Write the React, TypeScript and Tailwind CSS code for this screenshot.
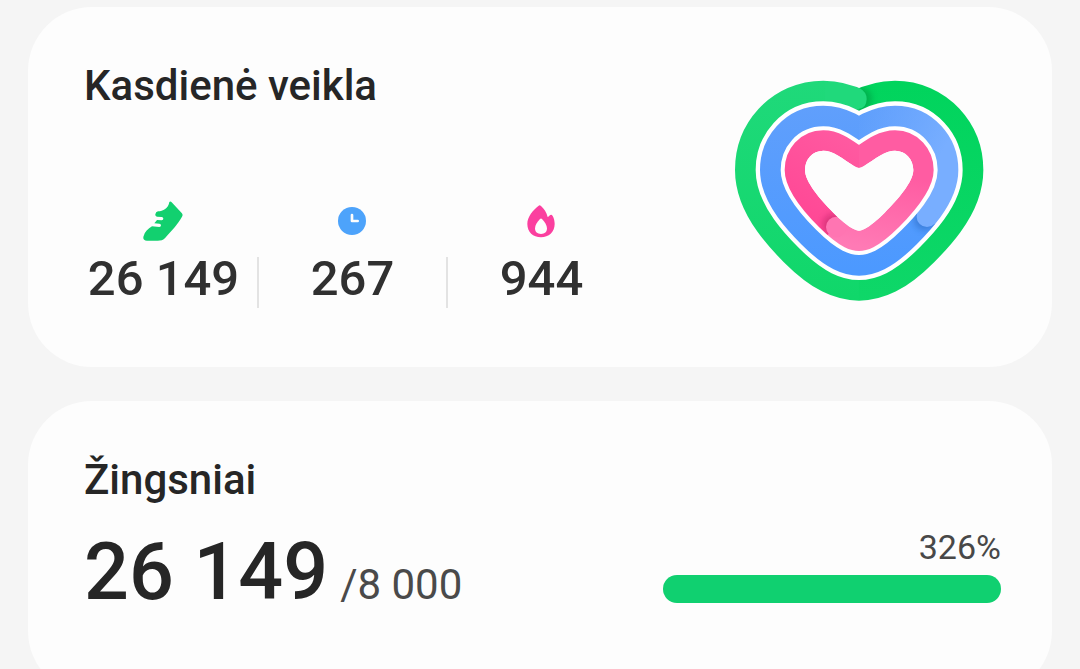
import type React from "react"

const HEART =
  "M402 294 Q396 294 388 289 C350 264 325 242 295 242 C262 242 240 268 240 300 C240 335 285 388 325 428 C345 448 368 468 386 477 Q396 482 402 482 Q408 482 418 477 C436 468 459 448 479 428 C519 388 565 335 565 300 C565 268 542 242 510 242 C480 242 454 264 416 289 Q408 294 402 294 Z"

interface Stat {
  label: string
  value: string
  icon: React.ReactNode
}

const ShoeIcon = () => (
  <svg viewBox="0 0 120 120" className="mr-1 h-10 w-10" aria-hidden="true">
    <path
      fill="#12d06f"
      d="M79 3 C81 0 84 1 86 4 L116 36 Q121 41 117 47 C105 70 84 90 67 110 C61 117 53 119 44 119 L12 119 C2 119 -1 112 2 105 C5 93 15 83 27 76 L49 78 Q54 78 54 73 Q54 69 49 68 L34 67 L42 57 L56 58 Q61 57 61 53 Q61 48 56 48 L42 47 Q36 46 37 40 Q38 32 45 31 C60 31 76 22 79 3 Z"
    />
  </svg>
)

const ClockIcon = () => (
  <svg viewBox="0 0 120 120" className="mr-1 h-10 w-10" aria-hidden="true">
    <circle cx="60" cy="60" r="42" fill="#4da3fb" />
    <path d="M60 42 V60 H77" fill="none" stroke="#fdfdfd" strokeWidth="8" strokeLinecap="round" strokeLinejoin="round" />
  </svg>
)

const FlameIcon = () => (
  <svg viewBox="0 0 120 120" className="mr-1 h-10 w-10" aria-hidden="true">
    <path
      fill="#fb3f9f"
      d="M53 14 Q56 11 60 15 C69 23 77 35 80 48 C83 47 85 44 88 42 Q92 40 95 45 C99 52 101 61 101 69 C101 93 83 109 60 109 C36 109 19 93 19 69 C19 46 36 28 53 14 Z"
    />
    <path fill="#fdfdfd" d="M57 54 Q60 51 63 54 C71 63 78 72 78 82 C78 93 71 99 60 99 C49 99 42 93 42 82 C42 72 49 63 57 54 Z" />
  </svg>
)

const stats: Stat[] = [
  { label: "Žingsniai", value: "26 149", icon: <ShoeIcon /> },
  { label: "Aktyvus laikas", value: "267", icon: <ClockIcon /> },
  { label: "Kalorijos", value: "944", icon: <FlameIcon /> },
]

// Every ring is an outward offset of the same inner heart
const RingMask = ({ id, outer, inner }: { id: string; outer: number; inner: number }) => (
  <mask id={id} maskUnits="userSpaceOnUse" x="0" y="0" width="810" height="720">
    <path d={HEART} fill="none" stroke="#fff" strokeWidth={outer} strokeLinejoin="round" />
    <path d={HEART} fill="#000" stroke="#000" strokeWidth={inner} strokeLinejoin="round" />
  </mask>
)

const HeartRings = () => (
  <svg viewBox="3 -3 810 720" className="mt-2 h-[240px] w-[270px] shrink-0" role="img" aria-label="Kasdienė veikla">
    <defs>
      <RingMask id="steps" outer={420} inner={296} />
      <RingMask id="time" outer={270} inner={146} />
      <RingMask id="calories" outer={122} inner={0} />
      <filter id="soft" x="-50%" y="-50%" width="200%" height="200%">
        <feGaussianBlur stdDeviation="9" />
      </filter>
      <linearGradient id="greenLeft" x1="0" y1="0" x2="0" y2="1">
        <stop offset="0" stopColor="#20d97b" />
        <stop offset="1" stopColor="#0fd769" />
      </linearGradient>
      <linearGradient id="greenRight" x1="0" y1="0" x2="0" y2="1">
        <stop offset="0" stopColor="#00d45c" />
        <stop offset="1" stopColor="#0fd769" />
      </linearGradient>
      <linearGradient id="blueBase" gradientUnits="userSpaceOnUse" x1="0" y1="108" x2="0" y2="600">
        <stop offset="0" stopColor="#609ffc" />
        <stop offset="1" stopColor="#4c99ff" />
      </linearGradient>
      <linearGradient id="blueEnd" gradientUnits="userSpaceOnUse" x1="402" y1="140" x2="640" y2="270">
        <stop offset="0" stopColor="#78aeff" stopOpacity="0" />
        <stop offset="1" stopColor="#78aeff" />
      </linearGradient>
      <linearGradient id="pinkBase" gradientUnits="userSpaceOnUse" x1="440" y1="200" x2="280" y2="450">
        <stop offset="0" stopColor="#ff5ca2" />
        <stop offset="1" stopColor="#ff4996" />
      </linearGradient>
      <linearGradient id="pinkEnd" gradientUnits="userSpaceOnUse" x1="360" y1="520" x2="410" y2="290">
        <stop offset="0" stopColor="#ff7ab5" />
        <stop offset="1" stopColor="#ff7ab5" stopOpacity="0" />
      </linearGradient>
    </defs>

    <path d={HEART} fill="#fff" stroke="#fff" strokeWidth="400" strokeLinejoin="round" />

    <g mask="url(#steps)">
      <rect width="402" height="720" fill="url(#greenLeft)" />
      <rect x="402" width="408" height="720" fill="url(#greenRight)" />
      <circle cx="404" cy="87" r="36" fill="#007a35" opacity="0.4" filter="url(#soft)" />
      <path d="M300 20 L404 55 Q425 66 425 87 Q425 116 398 118 L300 118 Z" fill="#20d97b" />
    </g>

    <g mask="url(#time)">
      <rect width="810" height="720" fill="url(#blueBase)" />
      <circle cx="600" cy="447" r="34" fill="#1c56a8" opacity="0.4" filter="url(#soft)" />
      <path d="M402 0 H810 V620 L606 441 L540 380 L402 293 Z" fill="url(#blueBase)" />
      <path d="M402 0 H810 V620 L606 441 L540 380 L402 293 Z" fill="url(#blueEnd)" />
      <circle cx="606" cy="440" r="31" fill="#78aeff" />
    </g>

    <g mask="url(#calories)">
      <rect width="810" height="720" fill="url(#pinkBase)" />
      <circle cx="326" cy="464" r="32" fill="#a01050" opacity="0.4" filter="url(#soft)" />
      <path d="M333 470 L290 513 V620 H700 V100 H402 V401 Z" fill="#ff5ca2" />
      <path d="M333 470 L290 513 V620 H700 V100 H402 V401 Z" fill="url(#pinkEnd)" />
      <circle cx="334" cy="471" r="31" fill="#ff75b2" />
    </g>

    <path d={HEART} fill="#fdfdfd" />
  </svg>
)

const App: React.FC = () => {
  return (
    <main className="flex h-screen flex-col gap-[34px] overflow-hidden bg-[#f5f5f5] px-7 pt-[7px] font-['Roboto',sans-serif] text-[#262626]">
      {/* Daily activity */}
      <section className="flex shrink-0 items-start justify-between rounded-[64px] bg-[#fdfdfd] px-14 pt-[54px] pb-[58px]">
        <div>
          <h2 className="text-[42px] leading-[50px] font-medium">Kasdienė veikla</h2>
          <ul className="mt-[90px] -ml-[14px] flex">
            {stats.map((stat) => (
              <li key={stat.label} aria-label={stat.label} className="group flex w-[189px] flex-col items-center gap-4">
                {stat.icon}
                <p className="h-[51px] w-full border-r-2 border-[#e3e3e3] text-center text-[49px] leading-[44px] font-medium whitespace-nowrap text-[#303030] group-last:border-transparent">
                  {stat.value}
                </p>
              </li>
            ))}
          </ul>
        </div>
        <HeartRings />
      </section>

      {/* Steps */}
      <section className="shrink-0 rounded-[64px] bg-[#fdfdfd] pt-[54px] pr-[51px] pb-[70px] pl-14">
        <h2 className="text-[42px] leading-[50px] font-medium">Žingsniai</h2>
        <div className="mt-[22px] flex items-end justify-between">
          <p className="flex items-baseline gap-3 leading-[80px]">
            <span className="text-[79px] font-medium">26 149</span>
            <span className="text-[42px] text-[#4a4a4a]">/8 000</span>
          </p>
          <div className="flex w-[338px] flex-col items-end gap-2 pb-[22px]">
            <span className="text-[34px] leading-10 text-[#484848]">326%</span>
            <div
              role="progressbar"
              aria-label="Žingsniai"
              aria-valuenow={100}
              className="h-7 w-full rounded-full bg-[#10d070]"
            />
          </div>
        </div>
      </section>
    </main>
  )
}

export default App
